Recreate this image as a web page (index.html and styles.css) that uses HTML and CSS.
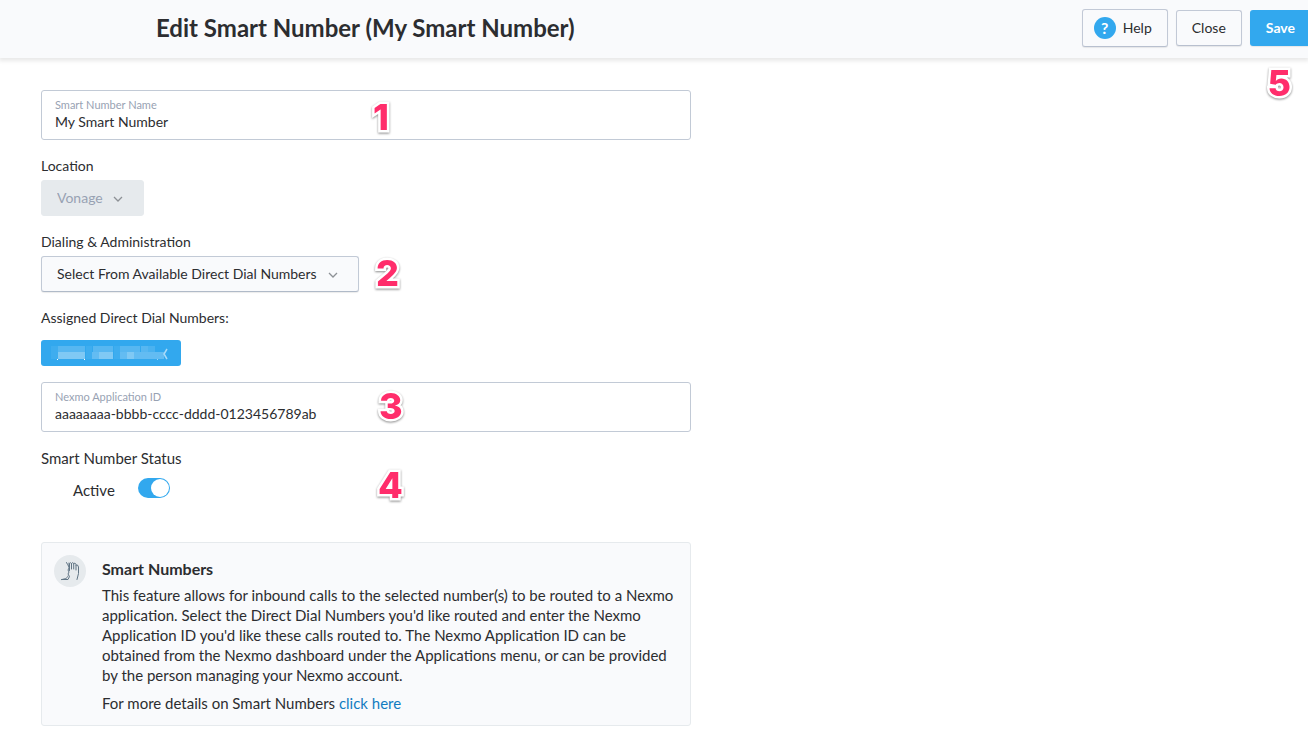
FILE: index.html
```html
<!DOCTYPE html>
<html lang="en">
<head>
<meta charset="utf-8">
<title>Edit Smart Number</title>
<link rel="stylesheet" href="styles.css">
</head>
<body>
<header class="topbar">
  <h1 class="title">Edit Smart Number (My Smart Number)</h1>
  <div class="actions">
    <button class="btn btn-help" type="button"><span class="help-icon">?</span>Help</button>
    <button class="btn" type="button">Close</button>
    <button class="btn btn-save" type="button">Save</button>
  </div>
  <span class="marker marker-save">5</span>
</header>
<main class="content">
  <div class="field">
    <label class="field-label" for="name">Smart Number Name</label>
    <input class="field-input" id="name" type="text" value="My Smart Number">
    <span class="marker marker-name">1</span>
  </div>

  <div class="group">
    <label class="label" for="location">Location</label>
    <div class="picker picker-disabled">
      <select class="select" id="location" disabled><option>Vonage</option></select>
      <svg class="chevron" viewBox="0 0 10 6"><path d="M1 1l4 4 4-4"/></svg>
    </div>
  </div>

  <div class="group">
    <label class="label" for="numbers">Dialing &amp; Administration</label>
    <div class="picker">
      <select class="select" id="numbers"><option>Select From Available Direct Dial Numbers</option></select>
      <svg class="chevron" viewBox="0 0 10 6"><path d="M1 1l4 4 4-4"/></svg>
      <span class="marker marker-dial">2</span>
    </div>
  </div>

  <div class="group group-assigned">
    <span class="label">Assigned Direct Dial Numbers:</span>
    <button class="chip" type="button" aria-label="Remove number">
      <svg class="chip-art" viewBox="0 0 140 26" shape-rendering="crispEdges">
        <g fill="#fff">
          <path opacity=".06" d="M10 6h7v13h-7zM45 6h6v13h-6zM73 6h6v13h-6z"/>
          <path opacity=".18" d="M17 6h27v6H17zM52 6h20v6H52zM79 6h20v6H79zM100 6h7v6h-7z"/>
          <path opacity=".12" d="M107 6h7v6h-7z"/>
          <path opacity=".38" d="M17 12h27v7H17zM58 12h14v7H58zM86 12h7v7h-7z"/>
          <path opacity=".24" d="M51 12h7v7h-7zM79 12h7v7h-7zM93 12h30v7H93z"/>
          <path d="M16 19h1v1h-1zM43 19h1v1h-1z"/>
          <path opacity=".5" d="M116 19h1v1h-1z"/>
        </g>
        <path d="M126 9l-3 5 3 5" fill="none" stroke="#a9daf8" stroke-width="1.500" shape-rendering="auto"/>
      </svg>
    </button>
  </div>

  <div class="field">
    <label class="field-label" for="appid">Nexmo Application ID</label>
    <input class="field-input" id="appid" type="text" value="aaaaaaaa-bbbb-cccc-dddd-0123456789ab">
    <span class="marker marker-app">3</span>
  </div>

  <section class="status">
    <div>Smart Number Status</div>
    <div class="status-row">
      <label for="active">Active</label>
      <input class="toggle" id="active" type="checkbox" role="switch" checked>
    </div>
    <span class="marker marker-status">4</span>
  </section>

  <section class="info">
    <svg class="info-icon" viewBox="0 0 32 32">
      <circle cx="16" cy="16" r="16" fill="#e6eaed"/>
      <g fill="none" stroke="#617585" stroke-linecap="round" stroke-linejoin="round">
        <path d="M12.500 7.500c1 1.500 1.500 3 2.500 4.500M15 8v5l-1 2 1 2-1 2 1.500 2.500L14 24.500H7.500M8 24.500c3-1 5-.5 6-3.500"/>
        <path d="M15.500 15.500V8.500q1-1.500 2 0V14M17.500 8.500q1-2 2.200 0V14M19.700 8.500q1.500-1.500 2.300 1V15M22 10q2-1 2.500 2v6.500l-1.500 6"/>
      </g>
    </svg>
    <div>
      <h2 class="info-title">Smart Numbers</h2>
      <p class="info-text">This feature allows for inbound calls to the selected number(s) to be routed to a Nexmo application. Select the Direct Dial Numbers you'd like routed and enter the Nexmo Application ID you'd like these calls routed to. The Nexmo Application ID can be obtained from the Nexmo dashboard under the Applications menu, or can be provided by the person managing your Nexmo account.</p>
      <p class="info-text">For more details on Smart Numbers <a class="link" href="#">click here</a></p>
    </div>
  </section>
</main>
</body>
</html>
```
FILE: styles.css
```css
* { box-sizing: border-box; }
body {
  margin: 0;
  background: #fff;
  color: #2c2d30;
  font: 14px/20px Lato, "Open Sans", sans-serif;
}
.topbar {
  position: relative;
  display: flex;
  align-items: center;
  justify-content: space-between;
  height: 58px;
  padding: 0 0 2px 156px;
  background: #f9fafc;
  box-shadow: 0 2px 4px 1px rgba(0, 0, 0, 0.09);
}
.title { margin: 0; font-size: 24px; line-height: 30px; font-weight: 700; }
.actions { display: flex; align-items: center; gap: 8px; }
.btn {
  height: 36px;
  padding: 0 15px;
  border: 1px solid #c2c9d6;
  border-bottom-color: #b8c0cf;
  border-radius: 3px;
  background: #f9fafc;
  box-shadow: 0 1px 1px rgba(0, 0, 0, 0.08);
  color: inherit;
  font: inherit;
}
.btn-help { display: flex; align-items: center; gap: 7px; height: 38px; padding: 0 15px 0 11px; }
.help-icon {
  width: 22px;
  height: 22px;
  border-radius: 50%;
  background: #32a8ee;
  color: #fff;
  font-size: 16px;
  font-weight: 700;
  line-height: 22px;
}
.btn-save {
  padding: 0 13px 0 16px;
  border: 0;
  border-radius: 3px 0 0 3px;
  background: #32a8ee;
  color: #fff;
  font-weight: 700;
}
.content { max-width: 732px; padding: 32px 41px 12px; }
.field {
  position: relative;
  height: 50px;
  padding: 7px 13px;
  border: 1px solid #c2cad6;
  border-radius: 3px;
}
.field-label { display: block; color: #98a2b3; font-size: 11px; line-height: 14px; }
.field-input {
  display: block;
  width: 100%;
  height: 20px;
  padding: 0;
  border: 0;
  outline: 0;
  background: none;
  color: inherit;
  font: inherit;
}
.group { margin-top: 16px; }
.label { display: block; margin-bottom: 4px; }
.picker { position: relative; display: inline-block; vertical-align: top; }
.select {
  display: block;
  height: 36px;
  padding: 0 40px 0 15px;
  border: 1px solid #c2cad6;
  border-bottom-color: #b0bac8;
  border-radius: 3px;
  background: #f9fafc;
  box-shadow: 0 1px 1px rgba(0, 0, 0, 0.08);
  color: inherit;
  font: inherit;
  appearance: none;
}
.picker-disabled .select {
  border-color: #e6eaed;
  background: #e6eaed;
  box-shadow: none;
  color: #98a2b3;
  opacity: 1;
}
.chevron {
  position: absolute;
  top: 16px;
  right: 21px;
  width: 10px;
  height: 6px;
  fill: none;
  stroke: #8d9196;
  stroke-width: 1.3;
  pointer-events: none;
}
.group-assigned { margin-bottom: 16px; }
.group-assigned .label { margin-bottom: 12px; }
.chip { display: block; padding: 0; border: 0; border-radius: 3px; background: #32a8ee; }
.chip-art { display: block; width: 140px; height: 26px; }
.status { position: relative; margin-top: 16px; font-size: 15px; line-height: 20px; }
.status-row { display: flex; gap: 23px; margin-top: 10px; padding-left: 32px; line-height: 24px; }
.toggle {
  position: relative;
  width: 32px;
  height: 20px;
  margin: 0;
  border-radius: 10px;
  background: #b8c0cf;
  appearance: none;
}
.toggle::after {
  content: "";
  position: absolute;
  top: 1px;
  left: 1px;
  width: 18px;
  height: 18px;
  border-radius: 50%;
  background: #fff;
}
.toggle:checked { background: #32a8ee; }
.toggle:checked::after { left: 13px; }
.info {
  display: flex;
  align-items: flex-start;
  gap: 16px;
  margin-top: 40px;
  padding: 12px;
  border: 1px solid #e6eaed;
  border-radius: 3px;
  background: #f9fafc;
  font-size: 15px;
}
.info-icon { flex: none; width: 32px; height: 32px; }
.info-title { margin: 4px 0 6px; font-size: 16px; line-height: 20px; font-weight: 700; }
.info-text { margin: 0 0 8px; }
.info-text:last-child { margin: 0; }
.link { color: #127cc1; text-decoration: none; }
.marker {
  position: absolute;
  color: #ff2d6b;
  font: 800 36px/36px Inter, "Liberation Sans", Arial, sans-serif;
  -webkit-text-stroke: 5px #fff;
  paint-order: stroke fill;
  filter: drop-shadow(0 1px 1px rgba(0, 0, 0, 0.45));
  pointer-events: none;
}
.marker-save { top: 65px; right: 17px; }
.marker-name { top: 8px; left: 331px; }
.marker-dial { top: -1px; left: 335px; }
.marker-app { top: 5px; left: 337px; }
.marker-status { top: 19px; left: 337px; }
```
